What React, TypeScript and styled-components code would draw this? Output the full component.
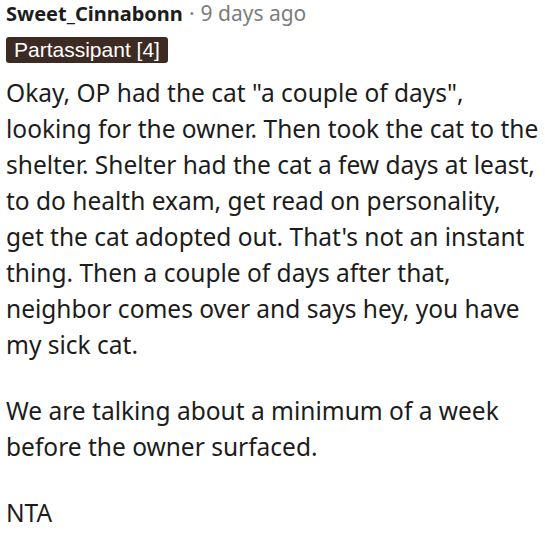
import styled, { createGlobalStyle } from "styled-components";

const GlobalStyle = createGlobalStyle`
  html, body {
    margin: 0;
    padding: 0;
    background: #ffffff;
  }
`;

const Comment = styled.div`
  width: 545px;
  padding: 0 6px;
  box-sizing: border-box;
  font-family: "Noto Sans", "Open Sans", sans-serif;
  color: #1c1c1c;
`;

const Meta = styled.div`
  display: flex;
  align-items: baseline;
  gap: 6px;
  height: 28px;
  font-size: 21px;
  line-height: 26px;
`;

const Author = styled.span`
  font-size: 20px;
  font-weight: 700;
  color: #1c1c1c;
`;

const Dot = styled.span`
  color: #7c7c7c;
`;

const Age = styled.span`
  color: #7c7c7c;
`;

const Flair = styled.span`
  display: inline-block;
  margin-top: 9px;
  padding: 0 8px;
  height: 26px;
  line-height: 26px;
  border-radius: 3px;
  background: #3d2a22;
  color: #ffffff;
  font-family: "Liberation Sans", Arial, sans-serif;
  font-size: 21px;
`;

const Body = styled.div`
  margin-top: 12px;
  font-size: 24.5px;
  line-height: 36px;
`;

const Para = styled.p`
  margin: 0 0 30px;
`;

export default function App() {
  return (
    <>
      <GlobalStyle />
      <Comment>
        <Meta>
          <Author>Sweet_Cinnabonn</Author>
          <Dot>·</Dot>
          <Age>9 days ago</Age>
        </Meta>
        <Flair>Partassipant [4]</Flair>
        <Body>
          <Para>
            Okay, OP had the cat "a couple of days", looking for the owner. Then
            took the cat to the shelter. Shelter had the cat a few days at least,
            to do health exam, get read on personality, get the cat adopted out.
            That's not an instant thing. Then a couple of days after that,
            neighbor comes over and says hey, you have my sick cat.
          </Para>
          <Para>
            We are talking about a minimum of a week before the owner surfaced.
          </Para>
          <Para>NTA</Para>
        </Body>
      </Comment>
    </>
  );
}
